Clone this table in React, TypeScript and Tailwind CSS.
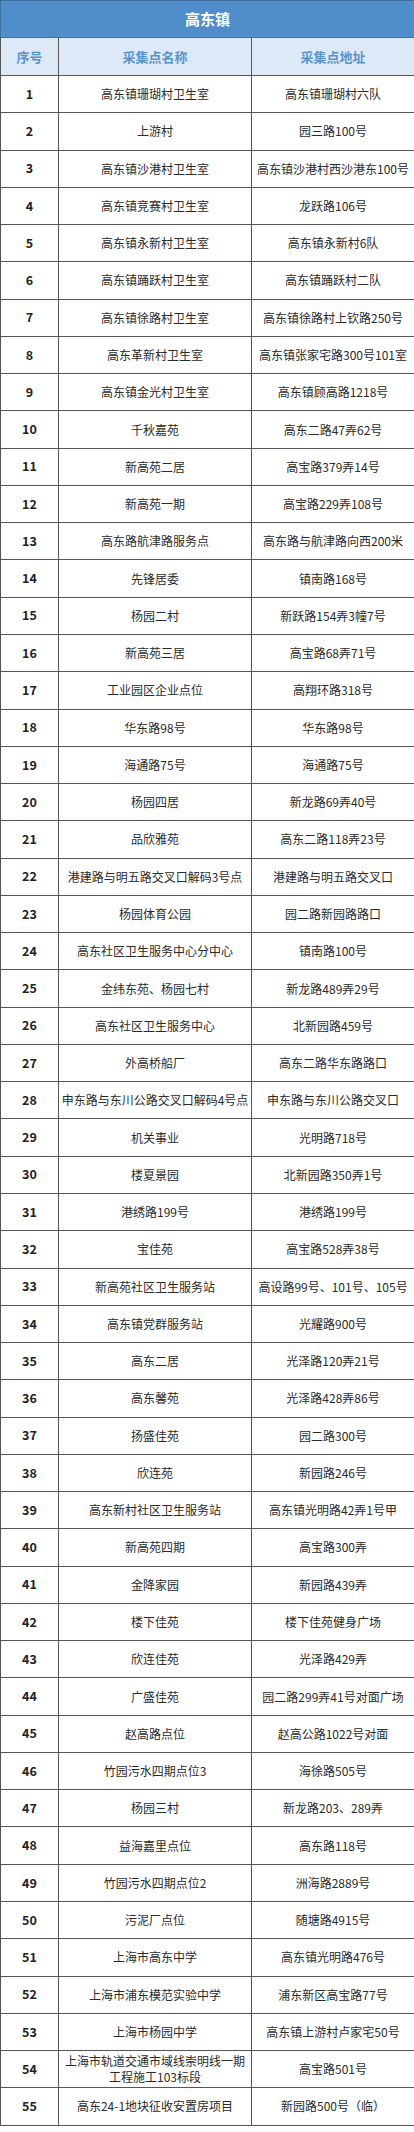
import React from 'react';

const rows: [string, string][] = [
  ['高东镇珊瑚村卫生室', '高东镇珊瑚村六队'],
  ['上游村', '园三路100号'],
  ['高东镇沙港村卫生室', '高东镇沙港村西沙港东100号'],
  ['高东镇竞赛村卫生室', '龙跃路106号'],
  ['高东镇永新村卫生室', '高东镇永新村6队'],
  ['高东镇踊跃村卫生室', '高东镇踊跃村二队'],
  ['高东镇徐路村卫生室', '高东镇徐路村上钦路250号'],
  ['高东革新村卫生室', '高东镇张家宅路300号101室'],
  ['高东镇金光村卫生室', '高东镇顾高路1218号'],
  ['千秋嘉苑', '高东二路47弄62号'],
  ['新高苑二居', '高宝路379弄14号'],
  ['新高苑一期', '高宝路229弄108号'],
  ['高东路航津路服务点', '高东路与航津路向西200米'],
  ['先锋居委', '镇南路168号'],
  ['杨园二村', '新跃路154弄3幢7号'],
  ['新高苑三居', '高宝路68弄71号'],
  ['工业园区企业点位', '高翔环路318号'],
  ['华东路98号', '华东路98号'],
  ['海通路75号', '海通路75号'],
  ['杨园四居', '新龙路69弄40号'],
  ['品欣雅苑', '高东二路118弄23号'],
  ['港建路与明五路交叉口解码3号点', '港建路与明五路交叉口'],
  ['杨园体育公园', '园二路新园路路口'],
  ['高东社区卫生服务中心分中心', '镇南路100号'],
  ['金纬东苑、杨园七村', '新龙路489弄29号'],
  ['高东社区卫生服务中心', '北新园路459号'],
  ['外高桥船厂', '高东二路华东路路口'],
  ['申东路与东川公路交叉口解码4号点', '申东路与东川公路交叉口'],
  ['机关事业', '光明路718号'],
  ['楼夏景园', '北新园路350弄1号'],
  ['港绣路199号', '港绣路199号'],
  ['宝佳苑', '高宝路528弄38号'],
  ['新高苑社区卫生服务站', '高设路99号、101号、105号'],
  ['高东镇党群服务站', '光耀路900号'],
  ['高东二居', '光泽路120弄21号'],
  ['高东馨苑', '光泽路428弄86号'],
  ['扬盛佳苑', '园二路300号'],
  ['欣连苑', '新园路246号'],
  ['高东新村社区卫生服务站', '高东镇光明路42弄1号甲'],
  ['新高苑四期', '高宝路300弄'],
  ['金降家园', '新园路439弄'],
  ['楼下佳苑', '楼下佳苑健身广场'],
  ['欣连佳苑', '光泽路429弄'],
  ['广盛佳苑', '园二路299弄41号对面广场'],
  ['赵高路点位', '赵高公路1022号对面'],
  ['竹园污水四期点位3', '海徐路505号'],
  ['杨园三村', '新龙路203、289弄'],
  ['益海嘉里点位', '高东路118号'],
  ['竹园污水四期点位2', '洲海路2889号'],
  ['污泥厂点位', '随塘路4915号'],
  ['上海市高东中学', '高东镇光明路476号'],
  ['上海市浦东模范实验中学', '浦东新区高宝路77号'],
  ['上海市杨园中学', '高东镇上游村卢家宅50号'],
  ['上海市轨道交通市域线崇明线一期工程施工103标段', '高宝路501号'],
  ['高东24-1地块征收安置房项目', '新园路500号（临）'],
];

export default function App() {
  return (
    <div className="w-[414px] h-[2132px] bg-white font-['Noto_Sans_CJK_SC','Noto_Sans',sans-serif]">
      <table className="w-[414px] table-fixed border-collapse">
        <colgroup>
          <col className="w-[58px]" />
          <col className="w-[193px]" />
          <col className="w-[163px]" />
        </colgroup>
        <thead>
          <tr className="h-[37px]">
            <th
              colSpan={3}
              className="bg-[#4f8ecb] text-white text-[15px] font-bold text-center border border-[#3f6f9e]"
            >
              高东镇
            </th>
          </tr>
          <tr className="h-[38px] bg-[#dde9f6] text-[#5a93c9] text-[13px] font-bold">
            <th className="border border-[#555]">序号</th>
            <th className="border border-[#555]">采集点名称</th>
            <th className="border border-[#555]">采集点地址</th>
          </tr>
        </thead>
        <tbody className="text-[12px] text-[#2a2a2a]">
          {rows.map(([name, addr], i) => (
            <tr key={i} className="h-[37.28px]">
              <td className="border border-[#555] text-center font-bold text-[12.5px] text-[#222]">{i + 1}</td>
              <td className="border border-[#555] text-center leading-4 px-[2px]">
                {i === 53 ? (
                  <>
                    上海市轨道交通市域线崇明线一期
                    <br />
                    工程施工103标段
                  </>
                ) : (
                  name
                )}
              </td>
              <td className="border border-[#555] text-center leading-4 px-[2px] whitespace-nowrap">{addr}</td>
            </tr>
          ))}
        </tbody>
      </table>
    </div>
  );
}
